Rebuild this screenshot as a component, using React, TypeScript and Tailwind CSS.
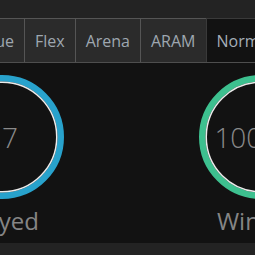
import React from 'react';

const tabs = [
  { label: 'Solo Queue', active: false },
  { label: 'Flex', active: false },
  { label: 'Arena', active: false },
  { label: 'ARAM', active: false },
  { label: 'Normal', active: true },
];

const stats = [
  { value: '17', label: 'Played', color: '#28a2cc' },
  { value: '100.0%', label: 'Winrate', color: '#3dc08f' },
];

const Ring: React.FC<{ color: string; value: string }> = ({ color, value }) => (
  <div className="grid h-[124px] w-[124px] place-items-center">
    <svg width="124" height="124" viewBox="0 0 124 124" className="[grid-area:1/1]">
      <circle cx="62" cy="62" r="58.75" fill="none" stroke={color} strokeWidth="6.5" />
      <circle cx="62" cy="62" r="54.75" fill="none" stroke="#ececec" strokeWidth="1.5" />
    </svg>
    <span className="[grid-area:1/1] whitespace-nowrap text-[28px] font-light leading-[38px] text-[#8a8a8a]">
      {value}
    </span>
  </div>
);

const App: React.FC = () => {
  return (
    <div className="h-[255px] w-full overflow-hidden bg-[#232323] pt-[18px] font-['Open_Sans',sans-serif]">
      {/* Queue tabs */}
      <div className="flex h-[45px] border-b-[1.5px] border-[#4e4e4e]">
        {tabs.map((tab, i) => {
          const cls = `flex shrink-0 items-center whitespace-nowrap border-l border-t px-[10px] text-[16px] leading-[22px] ${
            tab.active
              ? 'border-[#3a3a3a] bg-[#121212] text-[#a5aeb8]'
              : 'border-[#555] bg-[#2b2b2b] text-[#9ea7b0]'
          }`;
          if (i === 0) {
            return (
              <div key={tab.label} className="flex w-[24px] shrink-0 justify-end">
                <div className={cls}>{tab.label}</div>
              </div>
            );
          }
          return (
            <div key={tab.label} className={`${cls} grow-0`}>
              {tab.label}
            </div>
          );
        })}
        <div className="grow border-t border-[#3a3a3a] bg-[#121212]" />
      </div>

      {/* Stats panel */}
      <div className="h-[180px] bg-[#121212] pt-[12px]">
        <div className="ml-[-60px] flex gap-[135px]">
          {stats.map(s => (
            <div key={s.label} className="flex w-[124px] shrink-0 flex-col items-center">
              <Ring color={s.color} value={s.value} />
              <span className="mt-[6px] whitespace-nowrap text-[24px] leading-[32px] text-[#858585]">
                {s.label}
              </span>
            </div>
          ))}
        </div>
      </div>
    </div>
  );
};

export default App;
